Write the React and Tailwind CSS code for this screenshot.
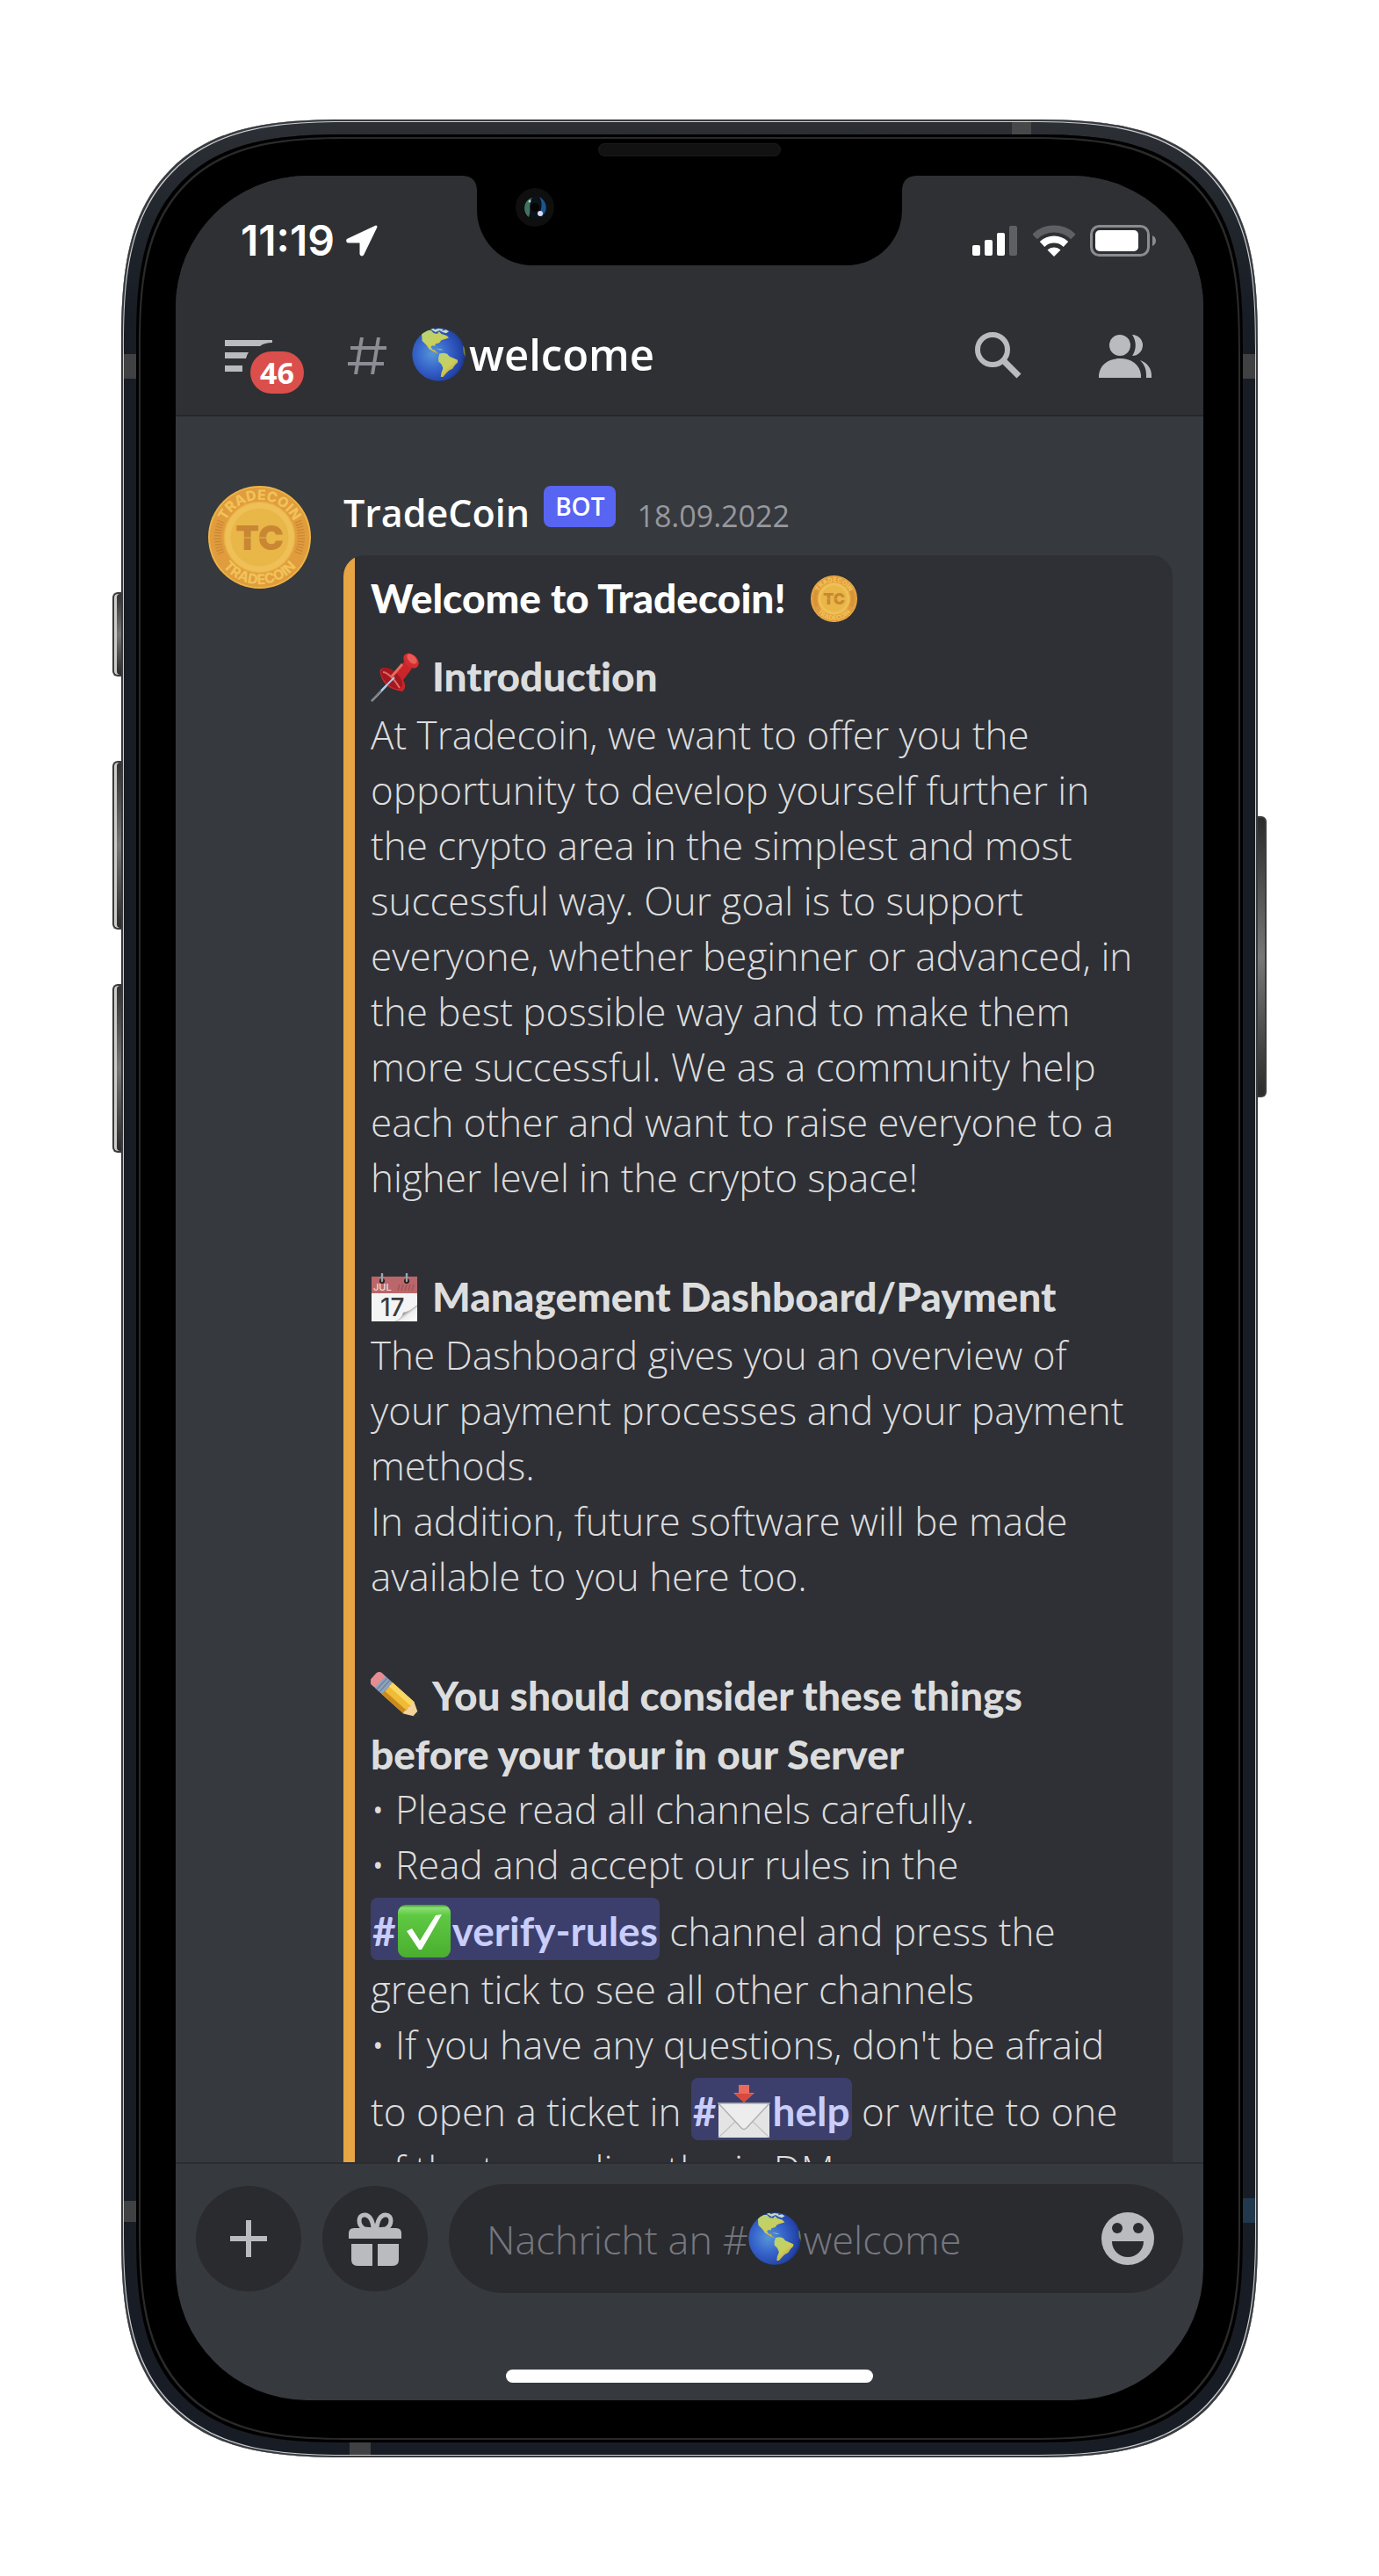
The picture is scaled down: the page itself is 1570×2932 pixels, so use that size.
import { useId } from 'react';

function Globe({ className }) {
  const id = useId();
  return (
    <svg viewBox="33 31 184 184" className={className} aria-hidden="true">
      <defs>
        <radialGradient id={id + 's'} cx="0.38" cy="0.48" r="0.65">
          <stop offset="0" stopColor="#5596d8" />
          <stop offset="0.45" stopColor="#3866cc" />
          <stop offset="0.85" stopColor="#2344a8" />
          <stop offset="1" stopColor="#1a2c78" />
        </radialGradient>
        <linearGradient id={id + 'l'} x1="0" y1="0" x2="0.7" y2="1">
          <stop offset="0" stopColor="#b5d478" />
          <stop offset="0.6" stopColor="#c9cf5c" />
          <stop offset="1" stopColor="#c79a2f" />
        </linearGradient>
        <clipPath id={id + 'c'}><circle cx="125" cy="123" r="91" /></clipPath>
      </defs>
      <circle cx="125" cy="123" r="91" fill={`url(#${id}s)`} />
      <g clipPath={`url(#${id}c)`}>
        <path d="M66 50L80 40L98 40L108 50L120 52L126 44L134 52L152 58L160 66L146 70L134 74L126 84L114 86L112 94L104 92L98 96L103 106L112 108L118 116L126 120L120 121L108 114L92 104L84 92L76 84L68 76Z" fill={`url(#${id}l)`} />
        <path d="M86 34L104 32L112 38L124 34L140 36L136 42L150 38L160 44L150 50L138 46L128 40L114 46L100 38Z" fill="#c9dcc4" />
        <path d="M116 102L132 104L142 108L130 107Z" fill="#b9cf6a" />
        <path d="M128 120L142 118L154 121L162 130L176 136L190 142L190 150L180 160L172 172L160 178L150 188L140 200L132 200L134 186L140 170L134 156L124 146L124 132Z" fill={`url(#${id}l)`} />
        <path d="M208 96L217 92V134L210 118Z" fill="#74802f" />
      </g>
    </svg>
  );
}

function Coin({ className }) {
  const id = useId();
  const hatch = [-22, -18, -14, -10, -6, -2, 2, 6, 10, 14, 18, 22];
  return (
    <svg viewBox="0 0 117 117" className={className} role="img" aria-label="Tradecoin">
      <defs>
        <path id={id + 't'} d="M16 58.5A42.5 42.5 0 0 1 101 58.5" />
        <path id={id + 'b'} d="M5 58.5A53.5 53.5 0 0 0 112 58.5" />
      </defs>
      <circle cx="58.5" cy="58.5" r="58.5" fill="#ecb347" />
      <circle cx="58.5" cy="58.5" r="56.5" fill="#e09c3d" />
      {hatch.map((a) => (
        <g key={a} stroke="#c98534" strokeWidth="1.2">
          <path d="M7 58.5H15" transform={`rotate(${a} 58.5 58.5)`} />
          <path d="M102 58.5H110" transform={`rotate(${a} 58.5 58.5)`} />
        </g>
      ))}
      <circle cx="58.5" cy="58.5" r="41" fill="#e8b045" />
      <circle cx="58.5" cy="58.5" r="39.5" fill="#efc057" />
      <circle cx="58.5" cy="58.5" r="33" fill="#e9b648" />
      <g fontFamily="Inter, sans-serif" fontWeight="800" fontSize="16" fill="#f1c258" textAnchor="middle">
        <text><textPath href={`#${id}t`} startOffset="50%">TRADECOIN</textPath></text>
        <text><textPath href={`#${id}b`} startOffset="50%">TRADECOIN</textPath></text>
      </g>
      <text x="58.5" y="72.5" fontFamily="Inter, sans-serif" fontWeight="900" fontSize="39" fill="#ca8733" textAnchor="middle">TC</text>
      <path d="M36 59H82" stroke="#e9b648" strokeWidth="1" />
    </svg>
  );
}

function Pushpin({ className }) {
  return (
    <svg viewBox="0 0 56 56" className={className} aria-hidden="true">
      <path d="M28 27L1 55" stroke="#b9cbd8" strokeWidth="2.4" />
      <path d="M12 43L1 55" stroke="#777" strokeWidth="1.6" />
      <path d="M11 19C15 15 22 18 27 24L38 10L47 18L37 31C40 36 40 41 36 44C30 43 22 41 17 36C12 30 10 24 11 19Z" fill="#c9252b" />
      <ellipse cx="24" cy="29" rx="15" ry="8" transform="rotate(44 24 29)" fill="#a3191f" />
      <path d="M14 22C18 22 26 28 33 40" stroke="#e36a62" strokeWidth="2" fill="none" />
      <path d="M36 13L24 27" stroke="#ea6b61" strokeWidth="3" />
      <ellipse cx="46" cy="9" rx="10" ry="7" transform="rotate(44 46 9)" fill="#d32d31" />
      <ellipse cx="47" cy="7" rx="7" ry="4" transform="rotate(44 47 7)" fill="#ea5b55" />
      <path d="M27 28L12 43" stroke="#a8d0ee" strokeWidth="1.8" />
    </svg>
  );
}

function Calendar({ className }) {
  const id = useId();
  return (
    <svg viewBox="0 0 56 56" className={className} aria-hidden="true">
      <defs>
        <linearGradient id={id} x1="0" y1="0" x2="1" y2="1">
          <stop offset="0.35" stopColor="#555" />
          <stop offset="0.6" stopColor="#eee" />
          <stop offset="1" stopColor="#fff" />
        </linearGradient>
      </defs>
      <rect x="1" y="4" width="52" height="51" fill="#f4f4f4" />
      <rect x="1" y="4" width="52" height="19" fill="#b9676a" />
      <path d="M31 20L33 13M35 20L37 13M39 20L41 13M43 20L45 13M47 20L49 13" stroke="#a45558" strokeWidth="1.5" />
      <text x="3" y="20" fontFamily="Inter, sans-serif" fontWeight="500" fontSize="11" fill="#f2dcdc">JUL</text>
      <text x="11" y="49" fontFamily="Inter, sans-serif" fontWeight="500" fontSize="28" fill="#3c3c3c">17</text>
      <path d="M53 36C46 42 42 44 37 45C36 49 33 53 27 55H53Z" fill={`url(#${id})`} />
      <circle cx="13" cy="9" r="3" fill="#2b1717" />
      <circle cx="41" cy="9" r="3" fill="#2b1717" />
      <path d="M13 1V9M41 1V9" stroke="#93a7b5" strokeWidth="2.4" strokeLinecap="round" />
    </svg>
  );
}

function Pencil({ className }) {
  return (
    <svg viewBox="0 0 56 56" className={className} aria-hidden="true">
      <g transform="translate(7 8) rotate(42)">
        <rect x="-5" y="-9" width="14" height="18" rx="5" fill="#e58d92" />
        <rect x="5" y="-9" width="11" height="18" fill="#8ea3bd" />
        <path d="M8 -9V9M12 -9V9" stroke="#6e84a0" strokeWidth="1.5" />
        <rect x="16" y="-9" width="33" height="18" fill="#f0bb35" />
        <rect x="16" y="-9" width="33" height="6" fill="#f9d765" />
        <rect x="16" y="4" width="33" height="5" fill="#cb8a1f" />
        <path d="M49 -9L62 -2V2L49 9C46 6 51 3 48 0C51 -3 46 -6 49 -9Z" fill="#f3d39b" />
        <path d="M59 -4L66 0L59 4Z" fill="#333" />
      </g>
    </svg>
  );
}

function CheckMark({ className }) {
  const id = useId();
  return (
    <svg viewBox="0 0 60 60" className={className} aria-hidden="true">
      <defs>
        <linearGradient id={id} x1="0" y1="0" x2="0" y2="1">
          <stop offset="0" stopColor="#3f9a2c" />
          <stop offset="0.06" stopColor="#8ade72" />
          <stop offset="0.2" stopColor="#5fc943" />
          <stop offset="1" stopColor="#4aae2f" />
        </linearGradient>
      </defs>
      <rect width="60" height="60" rx="9" fill={`url(#${id})`} />
      <path d="M10 30L16 27L25 41L43 12L50 11L27 51H24Z" fill="#fff" />
    </svg>
  );
}

function IncomingMail({ className }) {
  return (
    <svg viewBox="0 0 60 60" className={className} aria-hidden="true">
      <rect x="1" y="21" width="58" height="39" rx="1" fill="#e4e4e4" />
      <path d="M1 60L22 40M59 60L38 40" stroke="#c2c2c2" strokeWidth="1.2" />
      <path d="M1 21L27 49Q30 52 33 49L59 21Z" fill="#ededed" stroke="#adb0b5" strokeWidth="1.4" />
      <path d="M24 0H36V9H42L30 20L18 9H24Z" fill="#ea6b5c" />
      <path d="M20 10H40L30 20Z" fill="#d9493d" />
    </svg>
  );
}

function StatusBar() {
  return (
    <div className="flex h-[138px] shrink-0 items-center justify-between pt-[10px] pr-[53px] pl-[74px]">
      <div className="flex items-center gap-3">
        <time className="font-['Inter',sans-serif] text-[48px] leading-[60px] font-semibold text-white">11:19</time>
        <svg viewBox="0 0 38 38" className="h-[38px] w-[38px]" aria-hidden="true">
          <path d="M35 3L3 18Q2 20 4 20H17Q18 20 18 21V34Q19 36 20 34Z" fill="#fff" stroke="#fff" strokeWidth="3" strokeLinejoin="round" />
        </svg>
      </div>
      <div className="flex items-center gap-[17px]">
        <svg viewBox="0 0 52 34" className="h-[34px] w-[52px]" aria-hidden="true">
          <rect x="0" y="22" width="9" height="12" rx="2" fill="#fff" />
          <rect x="14" y="16" width="9" height="18" rx="2" fill="#fff" />
          <rect x="28" y="8" width="9" height="26" rx="2" fill="#fff" />
          <rect x="42" y="0" width="9" height="34" rx="2" fill="#5f6064" />
        </svg>
        <svg viewBox="0 0 48 36" className="h-[36px] w-[48px]" fill="none" aria-hidden="true">
          <path d="M2 13.5A31.5 31.5 0 0 1 46 13.5" stroke="#5f6064" strokeWidth="8" />
          <path d="M10.5 22A19.5 19.5 0 0 1 37.5 22" stroke="#fff" strokeWidth="8" />
          <path d="M24 36L16.5 28.5A11 11 0 0 1 31.5 28.5Z" fill="#fff" />
        </svg>
        <svg viewBox="0 0 76 36" className="h-[36px] w-[76px]" aria-hidden="true">
          <rect x="1.5" y="1.5" width="65" height="33" rx="9" fill="none" stroke="#8b8c8f" strokeWidth="3" />
          <rect x="6" y="6" width="49" height="24" rx="5" fill="#fff" />
          <path d="M71 12Q75 14 75 18Q75 22 71 24Z" fill="#8b8c8f" />
        </svg>
      </div>
    </div>
  );
}

function ChannelHeader() {
  return (
    <div className="flex h-[134px] items-center pr-[59px] pl-14">
      <button type="button" aria-label="46 mentions, open menu" className="relative flex h-[62px] w-[90px] shrink-0 items-center">
        <svg viewBox="0 0 54 36" className="h-9 w-[54px]" fill="#b9bbbe" aria-hidden="true">
          <path d="M0 0H54V3C48 3 44 4 40 7H0Z" />
          <path d="M0 14H27Q25 17 24 21H0Z" />
          <path d="M0 29H20V36H0Z" />
        </svg>
        <span className="absolute top-[26px] right-0 flex h-[48px] w-[61px] items-center justify-center rounded-full bg-[#da4f4b] font-['Open_Sans',sans-serif] text-[34px] leading-none font-bold text-white">46</span>
      </button>
      <svg viewBox="0 0 46 42" className="ml-[49px] h-[42px] w-[46px] shrink-0" fill="none" stroke="#8a8d93" strokeWidth="4" aria-hidden="true">
        <path d="M17 0L10 42M36 0L29 42M4 12H45M1 30H42" />
      </svg>
      <h1 className="ml-7 flex min-w-0 flex-1 items-center gap-1 pb-1 text-[49px] leading-[60px] font-semibold text-white">
        <Globe className="h-[61px] w-[61px] shrink-0" />
        welcome
      </h1>
      <button type="button" aria-label="Search" className="shrink-0">
        <svg viewBox="0 0 54 54" className="h-[54px] w-[54px]" fill="none" stroke="#b9bbbe" aria-hidden="true">
          <circle cx="20" cy="20" r="17" strokeWidth="6" />
          <path d="M33 33L50 50" strokeWidth="7" />
        </svg>
      </button>
      <button type="button" aria-label="Members" className="ml-[87px] shrink-0">
        <svg viewBox="0 0 60 49" className="h-[49px] w-[60px]" fill="#b9bbbe" aria-hidden="true">
          <circle cx="24" cy="12" r="12" />
          <path d="M0 49V46C1 34 11 27 24 27S47 34 48 46V49Z" />
          <path d="M38 0A12 12 0 0 1 38 24C43 17 43 7 38 0Z" />
          <path d="M47 29C55 32 60 38 60 46V49H54V46C54 39 52 34 47 29Z" />
        </svg>
      </button>
    </div>
  );
}

function Heading({ icon: Icon, children, rest }) {
  return (
    <h3 className="font-['Lato',sans-serif] text-[46px] leading-[63px] font-black text-[#dcddde] [font-variant-ligatures:none]">
      <span className="block pt-[9px] pb-1">
        <Icon className="mr-[14px] -mb-3 inline-block h-14 w-14 align-baseline" />
        {children}
      </span>
      {rest}
    </h3>
  );
}

function Lines({ items }) {
  return (
    <p>
      {items.map((line) => (
        <span key={line} className="block">{line}</span>
      ))}
    </p>
  );
}

function Channel({ icon: Icon, name }) {
  return (
    <a href={'#' + name} className="rounded-lg bg-[#3c3f6b] px-[2px] pt-[10px] pb-[6px] font-['Lato',sans-serif] text-[46px] font-bold text-[#c9cdfb]">
      #<Icon className="mx-[2px] -mb-[13px] inline-block h-[60px] w-[60px] align-baseline" />{name}
    </a>
  );
}

function Message() {
  return (
    <article className="flex items-start gap-[37px] pt-[79px] pr-[35px] pl-[37px]">
      <Coin className="h-[117px] w-[117px] shrink-0" />
      <div className="min-w-0 flex-1">
        <header className="flex items-baseline pb-[14px] leading-[61px]">
          <h2 className="text-[43px] font-semibold text-white">TradeCoin</h2>
          <span className="ml-4 h-[47px] self-start rounded-lg bg-[#5865f2] px-[13px] text-[28px] leading-[46px] font-semibold text-white">BOT</span>
          <time className="ml-6 text-[34px] text-[#96989d]">18.09.2022</time>
        </header>
        <div className="flex overflow-hidden rounded-[24px] bg-[#2f3035]">
          <div className="w-[13px] shrink-0 bg-[#e8a543]" />
          <div className="min-w-0 flex-1 pt-[17px] pb-8 pl-[18px] text-[44px] leading-[63px] font-[350] whitespace-nowrap text-[#dcddde]">
            <h2 className="mb-[17px] font-['Lato',sans-serif] text-[46px] font-black text-white">
              Welcome to Tradecoin!
              <Coin className="-mb-[10px] ml-7 inline-block h-[53px] w-[53px] align-baseline" />
            </h2>
            <Heading icon={Pushpin}>Introduction</Heading>
            <Lines
              items={[
                'At Tradecoin, we want to offer you the',
                'opportunity to develop yourself further in',
                'the crypto area in the simplest and most',
                'successful way. Our goal is to support',
                'everyone, whether beginner or advanced, in',
                'the best possible way and to make them',
                'more successful. We as a community help',
                'each other and want to raise everyone to a',
                'higher level in the crypto space!',
              ]}
            />
            <div className="mt-[63px]">
              <Heading icon={Calendar}>Management Dashboard/Payment</Heading>
              <Lines
                items={[
                  'The Dashboard gives you an overview of',
                  'your payment processes and your payment',
                  'methods.',
                  'In addition, future software will be made',
                  'available to you here too.',
                ]}
              />
            </div>
            <div className="mt-[63px]">
              <Heading icon={Pencil} rest="before your tour in our Server">You should consider these things</Heading>
              <p>• Please read all channels carefully.</p>
              <p>
                • Read and accept our rules in the
                <span className="block pt-3 pb-[3px]">
                  <Channel icon={CheckMark} name="verify-rules" /> channel and press the
                </span>
                green tick to see all other channels
              </p>
              <p>
                • If you have any questions, don't be afraid
                <span className="block pt-3 pb-[3px]">
                  to open a ticket in <Channel icon={IncomingMail} name="help" /> or write to one
                </span>
                of the team directly via DM.
              </p>
            </div>
          </div>
        </div>
      </div>
    </article>
  );
}

function Composer() {
  return (
    <form className="flex items-center gap-6 px-[23px] pt-[23px]" onSubmit={(e) => e.preventDefault()}>
      <button type="button" aria-label="Add attachment" className="flex h-[120px] w-[120px] shrink-0 items-center justify-center rounded-full bg-[#2a2b2f]">
        <svg viewBox="0 0 42 42" className="h-[42px] w-[42px]" stroke="#b9bbbe" strokeWidth="6" aria-hidden="true">
          <path d="M21 0V42M0 21H42" />
        </svg>
      </button>
      <button type="button" aria-label="Send a gift" className="flex h-[120px] w-[120px] shrink-0 items-center justify-center rounded-full bg-[#2a2b2f]">
        <svg viewBox="0 0 60 61" className="h-[61px] w-[60px]" fill="#b9bbbe" aria-hidden="true">
          <path d="M0 30V24Q0 18 6 18H54Q60 18 60 24V30Z" />
          <path d="M3 36H27V61H10Q3 61 3 54ZM33 36H57V54Q57 61 50 61H33Z" />
          <g fill="none" stroke="#b9bbbe" strokeWidth="5">
            <path d="M28 20C28 10 24 3 18 3C10 3 10 15 18 19Z" />
            <path d="M32 20C32 10 36 3 42 3C50 3 50 15 42 19Z" />
          </g>
        </svg>
      </button>
      <div className="relative flex h-[124px] min-w-0 flex-1 items-center rounded-full bg-[#2a2b2f] pr-[33px] pl-[43px]">
        <input type="text" aria-label="Nachricht an #welcome" className="peer h-full min-w-0 flex-1 bg-transparent text-[44px] font-[350] text-[#dcddde] outline-none" placeholder=" " />
        <span aria-hidden="true" className="pointer-events-none absolute inset-y-0 left-[43px] hidden items-center text-[45px] leading-none font-light text-[#767880] peer-placeholder-shown:flex">
          Nachricht an #
          <Globe className="mr-[3px] h-[60px] w-[60px]" />
          welcome
        </span>
        <button type="button" aria-label="Emoji" className="shrink-0">
          <svg viewBox="0 0 60 60" className="h-[60px] w-[60px]" aria-hidden="true">
            <circle cx="30" cy="30" r="30" fill="#b9bbbe" />
            <circle cx="18" cy="18" r="6" fill="#2a2b2f" />
            <circle cx="42" cy="18" r="6" fill="#2a2b2f" />
            <path d="M12 33H48A18 18 0 0 1 12 33Z" fill="#2a2b2f" />
          </svg>
        </button>
      </div>
    </form>
  );
}

function Notch() {
  return (
    <div aria-hidden="true" className="absolute top-0 left-1/2 flex -translate-x-1/2 items-start">
      <div className="h-[14px] w-[14px] bg-[radial-gradient(circle_at_0_100%,transparent_13px,#000_14px)]" />
      <div className="h-[102px] w-[484px] rounded-b-[63px] bg-black pt-[14px] pl-11">
        <div className="flex h-11 w-11 items-center justify-center rounded-full bg-[#0f0f10]">
          <svg viewBox="0 0 28 28" className="h-7 w-7">
            <circle cx="14" cy="14" r="13" fill="#0b1218" />
            <path d="M11 3C0 6 0 20 7 25C10 18 6 10 11 3Z" fill="#46705f" />
            <path d="M19 2C29 8 29 19 21 25C18 19 25 12 19 2Z" fill="#1b568f" />
            <circle cx="14" cy="14" r="5" fill="#050506" />
            <circle cx="20" cy="21" r="3" fill="#d8dcf4" />
            <circle cx="8" cy="7" r="1.5" fill="#b7d8cb" />
          </svg>
        </div>
      </div>
      <div className="h-[14px] w-[14px] bg-[radial-gradient(circle_at_100%_100%,transparent_13px,#000_14px)]" />
    </div>
  );
}

function SideButton({ className }) {
  return <div aria-hidden="true" className={'absolute w-[11px] ' + className} />;
}

const leftButton = '-left-[10px] rounded-l-md border-y-2 border-l-2 border-[#3b3c3b] bg-linear-to-b from-[#333] via-[#777] to-[#2c2c2c] shadow-[inset_3px_0_0_#cdcdca]';

export default function App() {
  return (
    <main className="flex min-h-screen items-start justify-center bg-white px-[138px] py-[136px] font-['Open_Sans',sans-serif]">
      <div className="relative aspect-[1294/2661] w-full max-w-[1294px]">
        <SideButton className={leftButton + ' top-[538px] h-[96px]'} />
        <SideButton className={leftButton + ' top-[730px] h-[192px]'} />
        <SideButton className={leftButton + ' top-[984px] h-[192px]'} />
        <SideButton className="top-[793px] -right-[10px] h-[320px] rounded-r-md border-y-2 border-r-2 border-[#3b3c3b] bg-linear-to-b from-[#2c2c2c] via-[#777] to-[#2c2c2c]" />

        <div className="relative flex h-full flex-col rounded-[200px] bg-[linear-gradient(#2c3035,#181d25_220px)] p-[17px] shadow-[inset_0_0_0_2px_#3a3b3d,inset_0_0_0_3px_#c9ced6] supports-[corner-shape:squircle]:rounded-[260px] supports-[corner-shape:squircle]:[corner-shape:superellipse(1.5)]">
          <div aria-hidden="true" className="absolute top-[267px] left-[3px] h-7 w-[14px] bg-[#404142]" />
          <div aria-hidden="true" className="absolute top-[267px] right-[3px] h-7 w-[14px] bg-[#404142]" />
          <div aria-hidden="true" className="absolute top-[2369px] left-[3px] h-6 w-[14px] bg-[#404142]" />
          <div aria-hidden="true" className="absolute top-[2366px] right-[3px] h-7 w-[14px] bg-[#22384d]" />
          <div aria-hidden="true" className="absolute top-[3px] right-[258px] h-[14px] w-[22px] bg-[#46484a]" />
          <div aria-hidden="true" className="absolute bottom-[3px] left-[260px] h-[17px] w-6 bg-[#404142]" />

          <div className="relative flex min-h-0 flex-1 flex-col rounded-[184px] bg-black px-[45px] pt-[47px] pb-12 shadow-[inset_0_0_0_3px_#000,inset_0_0_0_5px_#2a2a2a] supports-[corner-shape:squircle]:rounded-[243px] supports-[corner-shape:squircle]:[corner-shape:superellipse(1.5)]">
            <div aria-hidden="true" className="absolute top-[11px] left-1/2 h-[13px] w-[206px] -translate-x-1/2 rounded-full bg-[#121212] ring-1 ring-[#1a1a1a]" />

            <div className="relative flex min-h-0 flex-1 flex-col overflow-hidden rounded-[150px] bg-[#36393d]">
              <header className="shrink-0 border-b-2 border-[#26272b] bg-[#2f3034]">
                <StatusBar />
                <ChannelHeader />
              </header>
              <section aria-label="Messages" className="min-h-0 flex-1 overflow-hidden">
                <Message />
              </section>
              <footer className="shrink-0 border-t-2 border-[#2b2d31]">
                <Composer />
                <div aria-hidden="true" className="mx-auto mt-[87px] mb-5 h-[15px] w-[418px] rounded-full bg-white" />
              </footer>
              <Notch />
            </div>
          </div>
        </div>
      </div>
    </main>
  );
}
